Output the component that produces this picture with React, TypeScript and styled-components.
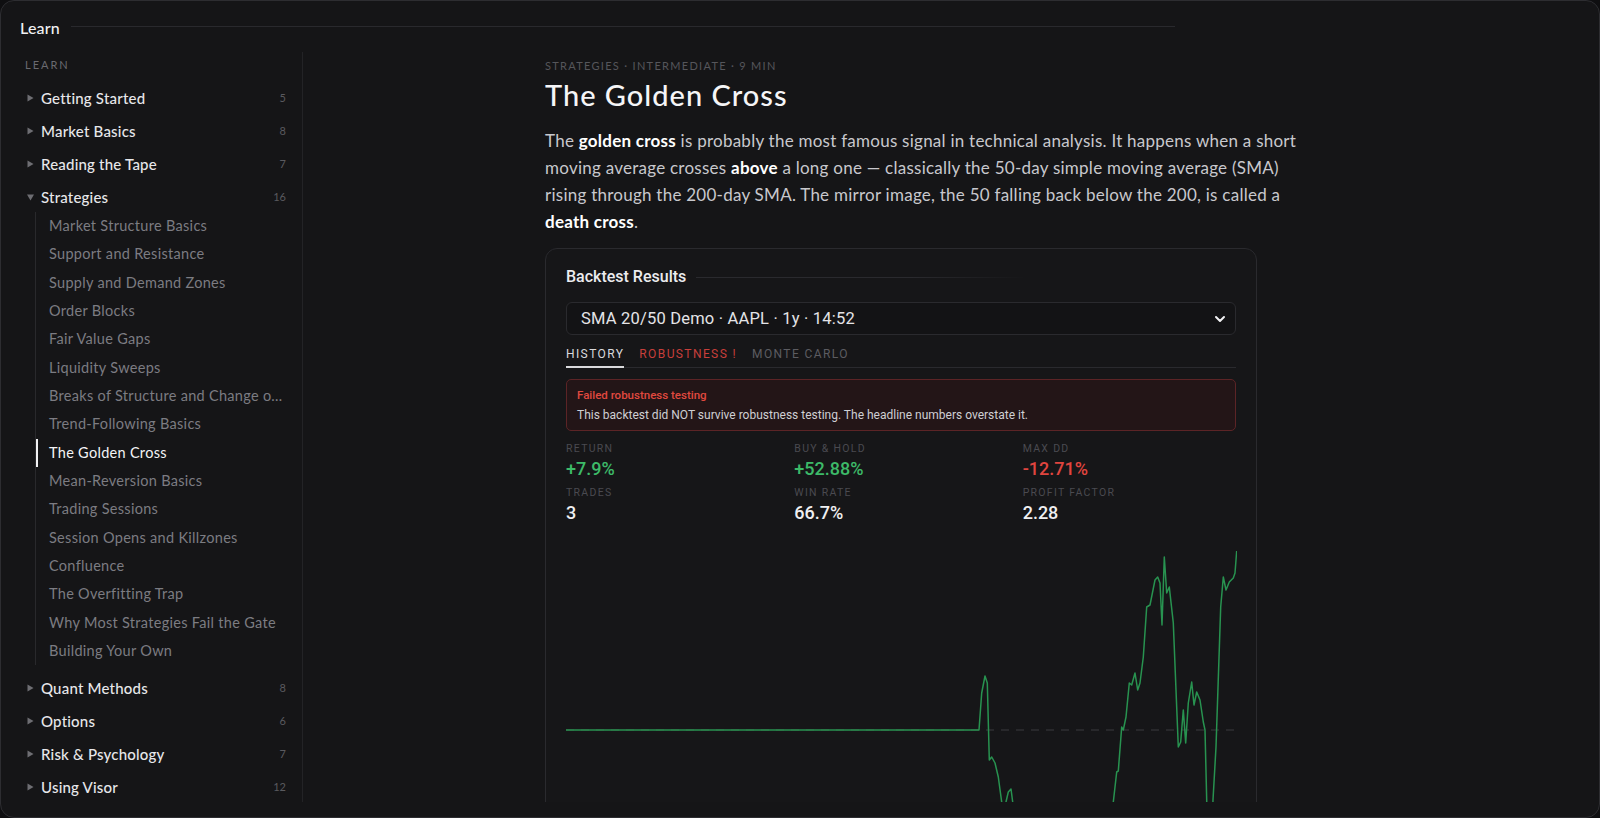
import React from 'react';
import styled, { createGlobalStyle } from 'styled-components';

const GlobalStyle = createGlobalStyle`
  html, body {
    margin: 0;
    padding: 0;
    background: #0f0f11;
  }
  body {
    font-family: Lato, "Noto Sans", sans-serif;
    -webkit-font-smoothing: antialiased;
  }
  * {
    box-sizing: border-box;
  }
`;

const Frame = styled.div`
  width: 1600px;
  height: 818px;
  border: 1px solid #2d2d31;
  border-radius: 14px;
  background: #151517;
  display: flex;
  flex-direction: column;
  overflow: hidden;
  padding-bottom: 15px;
`;

const Header = styled.header`
  height: 51px;
  flex-shrink: 0;
  display: flex;
  align-items: center;
  gap: 11px;
  padding: 1px 0 0 19px;
`;

const HeaderTitle = styled.h2`
  margin: 0;
  font-size: 16px;
  font-weight: 500;
  letter-spacing: 0.2px;
  color: #f1f1f3;
`;

const HeaderRule = styled.div`
  flex: 0 1 1104px;
  height: 1px;
  margin-top: -2px;
  background: #29292d;
`;

const Body = styled.div`
  flex: 1;
  min-height: 0;
  display: flex;
  padding-left: 23px;
`;

const Sidebar = styled.nav`
  width: 279px;
  flex-shrink: 0;
  border-right: 1px solid #232326;
  padding: 6px 16px 0 0;
  overflow: hidden;
`;

const SectionLabel = styled.div`
  font-size: 11px;
  line-height: 14px;
  letter-spacing: 2px;
  color: #6a6a70;
  margin: 0 0 9px 1px;
`;

const CategoryRow = styled.div`
  height: 33px;
  display: flex;
  align-items: center;
`;

const Caret = styled.svg`
  width: 7px;
  height: 8px;
  margin: 0 7px 0 3px;
  flex-shrink: 0;
`;

const CategoryName = styled.span`
  flex: 1;
  font-size: 15px;
  font-weight: 500;
  letter-spacing: 0.2px;
  color: #e7e7ea;
`;

const Count = styled.span`
  font-size: 11px;
  color: #5a5a5f;
`;

const SubList = styled.div`
  margin: -1px 0 6px 11px;
  border-left: 1px solid #29292c;
`;

const SubItem = styled.div<{ $active?: boolean }>`
  position: relative;
  height: 28.33px;
  line-height: 28.33px;
  padding-left: 13px;
  font-size: 14.5px;
  letter-spacing: 0.3px;
  color: ${(p) => (p.$active ? '#f4f4f6' : '#7c7c82')};
  white-space: nowrap;
  overflow: hidden;
  text-overflow: ellipsis;

  &::before {
    content: '';
    display: ${(p) => (p.$active ? 'block' : 'none')};
    position: absolute;
    left: 0;
    top: 0;
    bottom: 0;
    width: 2px;
    background: #f1f1f3;
  }
`;

const Main = styled.main`
  flex: 1;
  min-width: 0;
  overflow: hidden;
  padding: 7px 0 0 242px;
`;

const Meta = styled.div`
  font-size: 11px;
  line-height: 14px;
  letter-spacing: 1.3px;
  color: #56565b;
  text-transform: uppercase;
`;

const Title = styled.h1`
  margin: 4px 0 0;
  font-size: 29px;
  line-height: 36px;
  font-weight: 500;
  letter-spacing: 1px;
  color: #f5f5f7;
`;

const Paragraph = styled.p`
  margin: 14px 0 0;
  max-width: 765px;
  font-size: 17px;
  line-height: 27px;
  letter-spacing: 0.25px;
  color: #c8c8cd;

  strong {
    color: #ffffff;
    font-weight: 700;
  }
`;

const Card = styled.section`
  margin-top: 13px;
  width: 712px;
  border: 1px solid #2a2a2e;
  border-radius: 12px;
  padding: 18px 20px 0;
  background: #161618;
  font-family: Roboto, "Liberation Sans", sans-serif;
`;

const CardHeader = styled.div`
  display: flex;
  align-items: center;
  gap: 10px;
`;

const CardTitle = styled.h3`
  margin: 0;
  font-size: 16px;
  line-height: 20px;
  font-weight: 500;
  color: #ececef;
`;

const CardRule = styled.div`
  width: 330px;
  height: 1px;
  background: linear-gradient(90deg, #2a2a2e 0%, #2a2a2e 65%, rgba(42, 42, 46, 0) 100%);
`;

const Select = styled.div`
  margin-top: 15px;
  height: 33px;
  border: 1px solid #2a2a2e;
  border-radius: 6px;
  background: #131315;
  display: flex;
  align-items: center;
  justify-content: space-between;
  padding: 0 9px 0 14px;
  font-size: 16.5px;
  letter-spacing: 0.2px;
  color: #e4e4e7;
`;

const Tabs = styled.div`
  margin-top: 6px;
  display: flex;
  gap: 15px;
  border-bottom: 1px solid #2a2a2e;
`;

const Tab = styled.div<{ $tone: 'active' | 'alert' | 'idle' }>`
  padding: 6px 0 5px;
  font-size: 12px;
  line-height: 14px;
  letter-spacing: 1.4px;
  margin-bottom: -1px;
  color: ${(p) => (p.$tone === 'active' ? '#d9d9dc' : p.$tone === 'alert' ? '#c83f3b' : '#5c5c61')};
  border-bottom: 2px solid ${(p) => (p.$tone === 'active' ? '#d9d9dc' : 'transparent')};
`;

const Alert = styled.div`
  margin-top: 11px;
  padding: 8px 10px 8px;
  border: 1px solid #5c2426;
  border-radius: 5px;
  background: #231517;
`;

const AlertTitle = styled.div`
  font-size: 11.5px;
  line-height: 14px;
  font-weight: 500;
  color: #e0493f;
`;

const AlertBody = styled.div`
  margin-top: 6px;
  font-size: 12px;
  line-height: 14px;
  color: #cfcfd3;
`;

const Stats = styled.div`
  margin-top: 12px;
  display: grid;
  grid-template-columns: repeat(3, 1fr);
  column-gap: 15px;
  row-gap: 8px;
`;

const StatLabel = styled.div`
  font-size: 10.5px;
  line-height: 12px;
  letter-spacing: 1.3px;
  color: #4a4a50;
`;

const StatValue = styled.div<{ $tone?: 'up' | 'down' }>`
  margin-top: 4px;
  font-size: 18px;
  line-height: 20px;
  font-weight: 500;
  color: ${(p) => (p.$tone === 'up' ? '#3dba68' : p.$tone === 'down' ? '#e0453f' : '#efeff1')};
`;

const Chart = styled.svg`
  display: block;
  margin-top: 12px;
`;

const categoriesTop = [
  { name: 'Getting Started', count: 5 },
  { name: 'Market Basics', count: 8 },
  { name: 'Reading the Tape', count: 7 },
];

const categoriesBottom = [
  { name: 'Quant Methods', count: 8 },
  { name: 'Options', count: 6 },
  { name: 'Risk & Psychology', count: 7 },
  { name: 'Using Visor', count: 12 },
];

const lessons = [
  'Market Structure Basics',
  'Support and Resistance',
  'Supply and Demand Zones',
  'Order Blocks',
  'Fair Value Gaps',
  'Liquidity Sweeps',
  'Breaks of Structure and Change of Character',
  'Trend-Following Basics',
  'The Golden Cross',
  'Mean-Reversion Basics',
  'Trading Sessions',
  'Session Opens and Killzones',
  'Confluence',
  'The Overfitting Trap',
  'Why Most Strategies Fail the Gate',
  'Building Your Own',
];

const stats = [
  { label: 'RETURN', value: '+7.9%', tone: 'up' as const },
  { label: 'BUY & HOLD', value: '+52.88%', tone: 'up' as const },
  { label: 'MAX DD', value: '-12.71%', tone: 'down' as const },
  { label: 'TRADES', value: '3' },
  { label: 'WIN RATE', value: '66.7%' },
  { label: 'PROFIT FACTOR', value: '2.28' },
];

// equity curve, chart-local coordinates (baseline at y=195)
const equity: [number, number][] = [
  [0, 195], [413, 195], [415.7, 158], [419, 141], [421.3, 148], [423.3, 225],
  [425.7, 222], [429, 228], [432.3, 242], [435.7, 267], [437.5, 300],
  [439, 300], [440, 267], [442.3, 257], [445, 254], [446.7, 267], [448, 300],
  [546, 300], [547.3, 267], [550.7, 237], [552.3, 236], [555.7, 192], [557.3, 195],
  [560, 182], [563.3, 148], [565.7, 150], [569, 138], [571.7, 155], [574, 148],
  [577.3, 122], [580.7, 72], [584, 70], [589, 45], [591.7, 42], [594, 48],
  [596, 90], [598.3, 22], [600.7, 58], [603.3, 52], [607.3, 88], [612.3, 212],
  [614.7, 207], [617.3, 175], [619.7, 208], [622.3, 168], [625.7, 147], [628, 170],
  [630.7, 157], [634, 165], [637.3, 187], [639, 195], [640.7, 265], [641.5, 300],
  [646, 300], [647, 265], [650, 212], [654.7, 72], [657.3, 42], [660, 55],
  [663.3, 47], [667.3, 43], [669, 38], [670.7, 16],
];

const Triangle: React.FC<{ open?: boolean }> = ({ open }) => (
  <Caret viewBox="0 0 7 8">
    {open ? (
      <polygon points="0,1.5 7,1.5 3.5,7.5" fill="#6d6d72" />
    ) : (
      <polygon points="0.5,0.5 6.5,4 0.5,7.5" fill="#6d6d72" />
    )}
  </Caret>
);

const Category: React.FC<{ name: string; count: number; open?: boolean }> = ({ name, count, open }) => (
  <CategoryRow>
    <Triangle open={open} />
    <CategoryName>{name}</CategoryName>
    <Count>{count}</Count>
  </CategoryRow>
);

export default function App() {
  const path = equity.map(([x, y], i) => `${i ? 'L' : 'M'}${x} ${y}`).join(' ');

  return (
    <>
      <GlobalStyle />
      <Frame>
        <Header>
          <HeaderTitle>Learn</HeaderTitle>
          <HeaderRule />
        </Header>
        <Body>
          <Sidebar>
            <SectionLabel>LEARN</SectionLabel>
            {categoriesTop.map((c) => (
              <Category key={c.name} name={c.name} count={c.count} />
            ))}
            <Category name="Strategies" count={16} open />
            <SubList>
              {lessons.map((l) => (
                <SubItem key={l} $active={l === 'The Golden Cross'}>
                  {l}
                </SubItem>
              ))}
            </SubList>
            {categoriesBottom.map((c) => (
              <Category key={c.name} name={c.name} count={c.count} />
            ))}
          </Sidebar>
          <Main>
            <Meta>Strategies · Intermediate · 9 min</Meta>
            <Title>The Golden Cross</Title>
            <Paragraph>
              The <strong>golden cross</strong> is probably the most famous signal in technical analysis. It
              happens when a short moving average crosses <strong>above</strong> a long one — classically the
              50-day simple moving average (SMA) rising through the 200-day SMA. The mirror image, the 50
              falling back below the 200, is called a <strong>death cross</strong>.
            </Paragraph>
            <Card>
              <CardHeader>
                <CardTitle>Backtest Results</CardTitle>
                <CardRule />
              </CardHeader>
              <Select>
                <span>SMA 20/50 Demo · AAPL · 1y · 14:52</span>
                <svg width="12" height="8" viewBox="0 0 12 8">
                  <path d="M2 2 L6 6 L10 2" stroke="#f2f2f4" strokeWidth="2" fill="none" strokeLinecap="round" strokeLinejoin="round" />
                </svg>
              </Select>
              <Tabs>
                <Tab $tone="active">HISTORY</Tab>
                <Tab $tone="alert">ROBUSTNESS !</Tab>
                <Tab $tone="idle">MONTE CARLO</Tab>
              </Tabs>
              <Alert>
                <AlertTitle>Failed robustness testing</AlertTitle>
                <AlertBody>
                  This backtest did NOT survive robustness testing. The headline numbers overstate it.
                </AlertBody>
              </Alert>
              <Stats>
                {stats.map((s) => (
                  <div key={s.label}>
                    <StatLabel>{s.label}</StatLabel>
                    <StatValue $tone={s.tone}>{s.value}</StatValue>
                  </div>
                ))}
              </Stats>
              <Chart width="671" height="300" viewBox="0 0 671 300">
                <line x1="0" y1="195" x2="671" y2="195" stroke="#3a3a3f" strokeWidth="1" strokeDasharray="8 7" />
                <path d={path} fill="none" stroke="#289350" strokeWidth="1.5" strokeLinejoin="round" />
              </Chart>
            </Card>
          </Main>
        </Body>
      </Frame>
    </>
  );
}
